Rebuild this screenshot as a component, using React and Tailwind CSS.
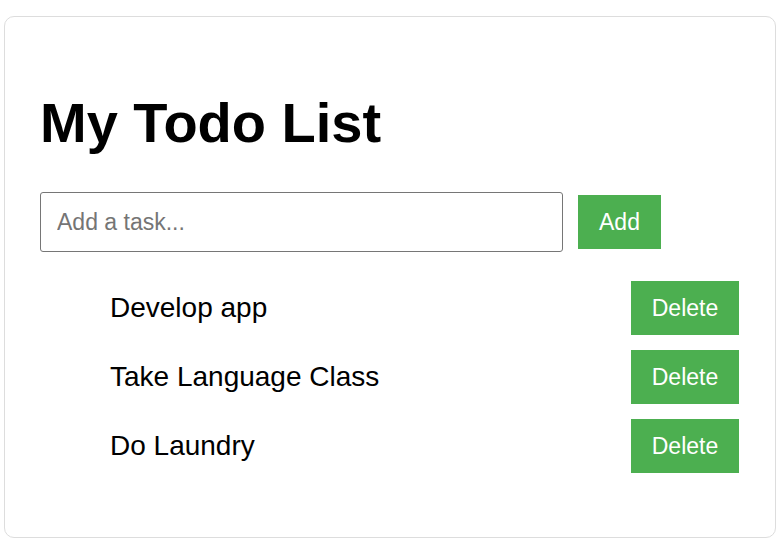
import React, { useState } from 'react';

const initialTodos = ['Develop app', 'Take Language Class', 'Do Laundry'];

const App = () => {
    const [todos, setTodos] = useState(initialTodos);
    const [text, setText] = useState('');

    const addTodo = () => {
        if (!text.trim()) return;
        setTodos(prev => [...prev, text.trim()]);
        setText('');
    };

    const removeTodo = (index) => {
        setTodos(prev => prev.filter((_, i) => i !== index));
    };

    return (
        <div className="bg-white min-h-[543px] pt-4 px-1 font-['Liberation_Sans',Arial,sans-serif] text-black">
            <div className="w-[772px] h-[522px] border border-[#dddddd] rounded-[10px] pl-[35px] pr-[36px] pt-[71px]">
                <h1 className="text-[56px] font-bold leading-[69px]">My Todo List</h1>

                <div className="flex items-center gap-[15px] mt-[35px]">
                    <input
                        value={text}
                        onChange={e => setText(e.target.value)}
                        placeholder="Add a task..."
                        className="w-[523px] h-[60px] border border-[#767676] rounded-[3px] px-4 text-[23px] placeholder:text-[#757575] outline-none"
                    />
                    <button
                        onClick={addTodo}
                        className="w-[83px] h-[54px] bg-[#4caf50] text-white text-[23px]"
                    >
                        Add
                    </button>
                </div>

                <ul className="mt-[29px] pl-[70px] flex flex-col gap-[15px]">
                    {todos.map((todo, i) => (
                        <li key={i} className="flex items-center justify-between">
                            <span className="text-[28px]">{todo}</span>
                            <button
                                onClick={() => removeTodo(i)}
                                className="w-[108px] h-[54px] bg-[#4caf50] text-white text-[23px]"
                            >
                                Delete
                            </button>
                        </li>
                    ))}
                </ul>
            </div>
        </div>
    );
};

export default App;
